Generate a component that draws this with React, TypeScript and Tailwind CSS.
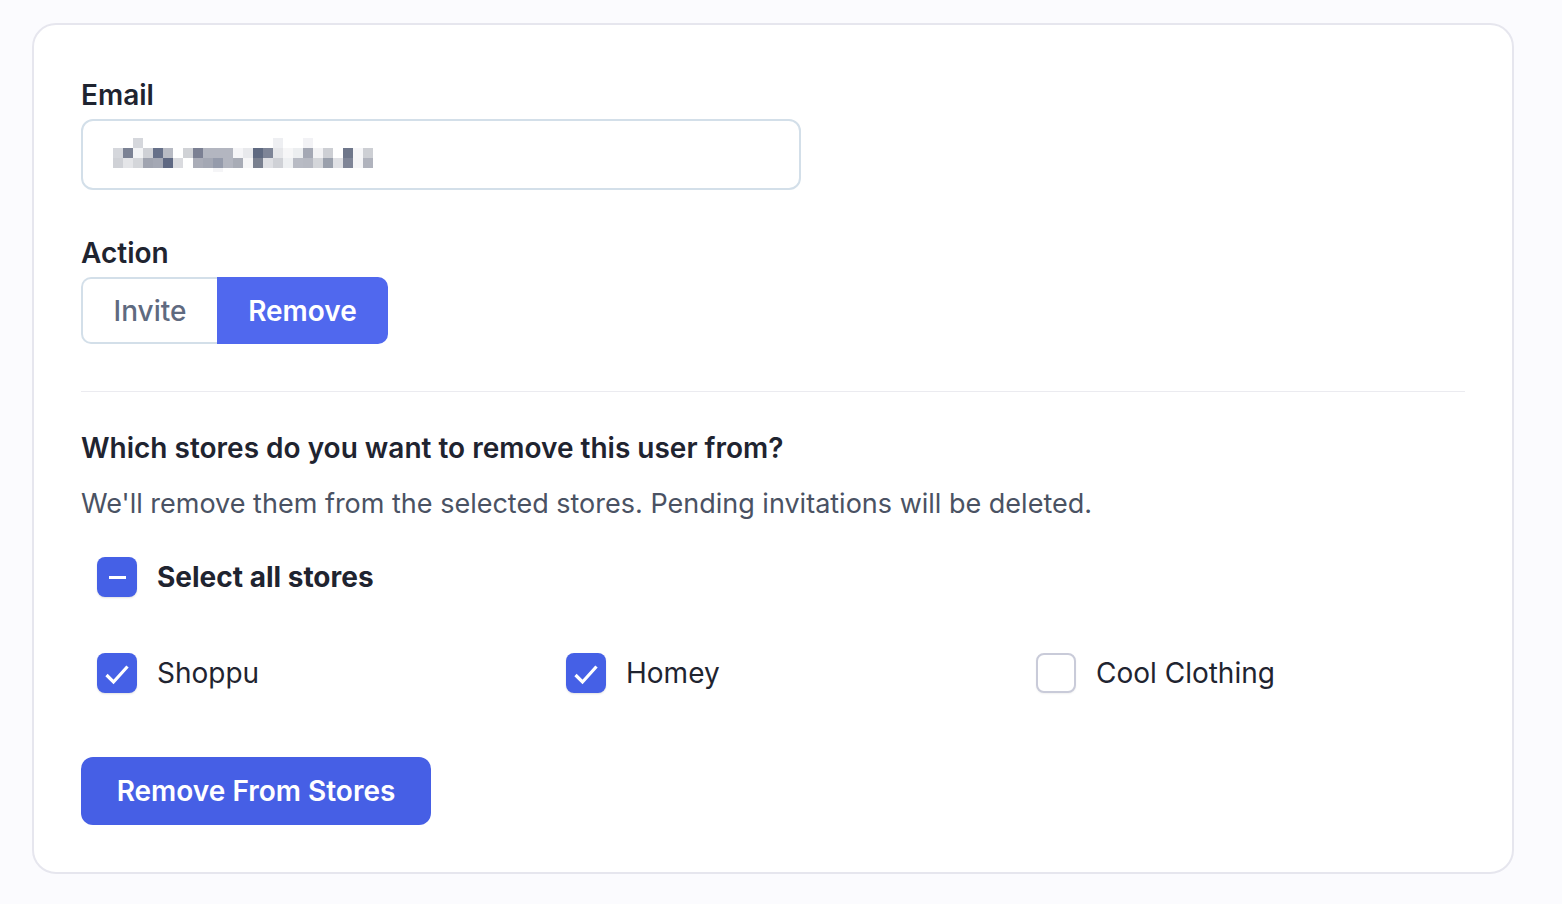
import React from "react";

const rows: string[][] = [
  ["", "", "#d5d7dc", "", "", "", "", "", "", "", "", "", "", "", "", "", "#eeeff2", "", "", "#f2f2f5", "", "", "", "", "", ""],
  ["#d5d7dc", "#7b8294", "#f2f3f5", "#cfd1d6", "#667089", "#b8bbc4", "", "#d0d2d6", "#7b8093", "#b3b6c0", "#b3b6c0", "#b3b6c0", "#f5f5f7", "#e8e9ec", "#5f6a81", "#7e8597", "#e6e7ea", "#f6f6f7", "#eceef0", "#a4a8b4", "#f2f2f4", "#cdcfd4", "", "#6f778b", "#f6f6f8", "#cdcfd4"],
  ["#cfd1d6", "#e4e5e8", "#d4d6da", "#a0a4b0", "#a4a8b4", "#5e6882", "#dadbdf", "", "#aaadb8", "#a4a8b4", "#959bab", "#b3b6c0", "#a8acb6", "#f6f6f7", "#79808f", "#dfe0e4", "#cfd1d6", "#eef0f2", "#b8bbc4", "#b6b9c2", "#d4d6da", "#9aa0ac", "#e0e1e5", "#7f8597", "#f5f5f7", "#b0b3bd"],
  ["", "", "", "", "", "", "", "", "", "", "#f5f5f7", "", "", "", "", "", "", "", "", "", "", "", "", "", "", ""],
];

function Pixelated() {
  return (
    <svg width="260" height="36" viewBox="0 0 260 36" className="block">
      {rows.map((r, ri) =>
        r.map((c, ci) =>
          c ? (
            <rect
              key={`${ri}-${ci}`}
              x={ci * 10}
              y={ri === 3 ? 30 : ri * 10}
              width="10"
              height={ri === 3 ? 4 : 10}
              fill={c}
            />
          ) : null
        )
      )}
    </svg>
  );
}

function Checked() {
  return (
    <div className="w-10 h-10 rounded-[8px] bg-[#4560e6] shadow-[0_1px_2px_rgba(0,0,0,0.12)] flex items-center justify-center shrink-0">
      <svg width="40" height="40" viewBox="0 0 40 40" fill="none">
        <path d="M9.5 22 L16.5 29 L30.5 13.5" stroke="white" strokeWidth="3.2" strokeLinecap="butt" strokeLinejoin="miter" />
      </svg>
    </div>
  );
}

function Indeterminate() {
  return (
    <div className="w-10 h-10 rounded-[8px] bg-[#4560e6] shadow-[0_1px_2px_rgba(0,0,0,0.12)] flex items-center justify-center shrink-0">
      <div className="w-[17px] h-[3px] bg-white" />
    </div>
  );
}

function Unchecked() {
  return (
    <div className="w-10 h-10 rounded-[8px] border-2 border-[#c9cbd9] bg-white shadow-[0_1px_2px_rgba(0,0,0,0.06)] shrink-0" />
  );
}

export default function App() {
  return (
    <div className="min-h-[904px] w-full bg-[#fbfbfe] pt-[23px] pl-[32px] font-['Inter','Noto_Sans',sans-serif] text-[#1f2430]">
      <div className="w-[1482px] h-[851px] rounded-[24px] border-2 border-[#e6e6ee] bg-white px-[47px] pt-[52px] pb-[47px]">
        <div className="text-[28px] leading-[36px] font-semibold">Email</div>
        <div className="mt-[6px] w-[720px] h-[71px] rounded-[12px] border-2 border-[#d3dfe9] flex items-center pl-[30px]">
          <div className="mt-[2px]">
            <Pixelated />
          </div>
        </div>

        <div className="mt-[45px] text-[28px] leading-[36px] font-semibold">Action</div>
        <div className="mt-[6px] flex h-[67px]">
          <div className="w-[136px] h-full rounded-l-[10px] border-2 border-r-0 border-[#d3dfe9] flex items-center justify-center text-[28px] font-medium text-[#5f6a80]">
            Invite
          </div>
          <div className="w-[171px] h-full rounded-r-[10px] bg-[#5068ee] flex items-center justify-center text-[28px] font-semibold text-white">
            Remove
          </div>
        </div>

        <div className="mt-[47px] h-[1px] bg-[#ebebf0]" />

        <div className="mt-[38px] text-[28px] leading-[36px] font-semibold">
          Which stores do you want to remove this user from?
        </div>
        <div className="mt-[20px] text-[27px] leading-[36px] text-[#4a5263]">
          We'll remove them from the selected stores. Pending invitations will be deleted.
        </div>

        <div className="mt-[35px] pl-[16px] flex items-center gap-[20px]">
          <Indeterminate />
          <span className="text-[28px] leading-[36px] font-bold">Select all stores</span>
        </div>

        <div className="mt-[56px] pl-[16px] grid grid-cols-[469px_470px_1fr]">
          <div className="flex items-center gap-[20px]">
            <Checked />
            <span className="text-[28px] leading-[36px]">Shoppu</span>
          </div>
          <div className="flex items-center gap-[20px]">
            <Checked />
            <span className="text-[28px] leading-[36px]">Homey</span>
          </div>
          <div className="flex items-center gap-[20px]">
            <Unchecked />
            <span className="text-[28px] leading-[36px]">Cool Clothing</span>
          </div>
        </div>

        <button className="mt-[64px] w-[350px] h-[68px] rounded-[12px] bg-[#465fe5] text-white text-[28px] font-semibold flex items-center justify-center">
          Remove From Stores
        </button>
      </div>
    </div>
  );
}
